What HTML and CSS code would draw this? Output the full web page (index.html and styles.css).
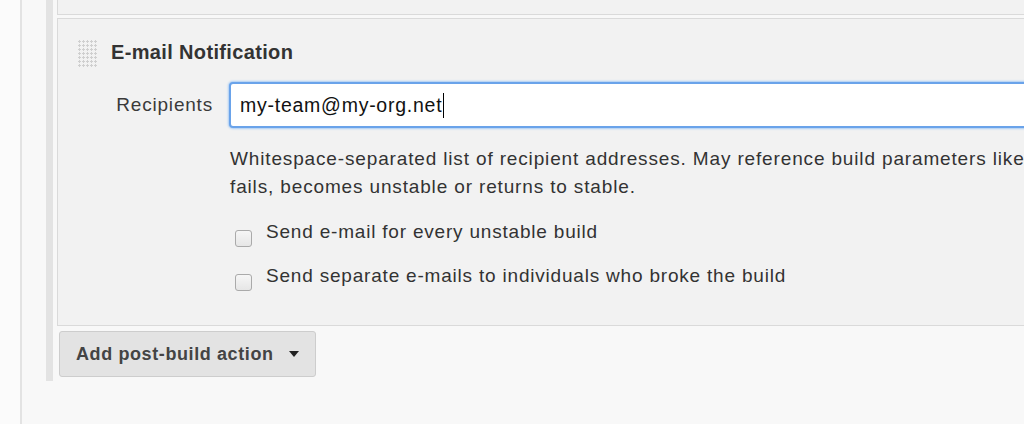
FILE: index.html
```html
<!DOCTYPE html>
<html>
<head>
<meta charset="utf-8">
<link rel="stylesheet" href="styles.css">
</head>
<body>
<div class="page">
  <div class="gutter"></div>
  <div class="main">
    <div class="builder">
      <div class="section section-prev"></div>
      <div class="section section-mail">
        <div class="section-head">
          <div class="grip"></div>
          <div class="title">E-mail Notification</div>
        </div>
        <div class="field">
          <label class="field-label">Recipients</label>
          <div class="field-body">
            <div class="text-input">my-team@my-org.net<span class="caret"></span></div>
            <div class="help">Whitespace-separated list of recipient addresses. May reference build parameters like $PARAM. E-mail will be sent when a build<br>fails, becomes unstable or returns to stable.</div>
            <div class="check-row">
              <span class="checkbox"></span>
              <span class="check-label">Send e-mail for every unstable build</span>
            </div>
            <div class="check-row">
              <span class="checkbox"></span>
              <span class="check-label">Send separate e-mails to individuals who broke the build</span>
            </div>
          </div>
        </div>
      </div>
      <button class="add-btn">Add post-build action <span class="tri"></span></button>
    </div>
  </div>
</div>
</body>
</html>
```
FILE: styles.css
```css
html, body {
  margin: 0;
  padding: 0;
  height: 424px;
  overflow: hidden;
}
body {
  background: #f8f8f8;
  font-family: "Liberation Sans", Arial, sans-serif;
  color: #333;
}
.page {
  display: flex;
  height: 424px;
}
.gutter {
  width: 20px;
  flex: none;
  background: #fbfbfb;
  border-right: 2px solid #e3e3e3;
}
.main {
  flex: 1;
  min-width: 0;
  background: #f8f8f8;
  padding-left: 24px;
}
.builder {
  border-left: 7px solid #e3e3e3;
  padding-left: 4px;
  padding-bottom: 4px;
  width: 1200px;
}
.section {
  background: #f2f2f2;
  border: 1px solid #dadada;
}
.section-prev {
  border-top: none;
  height: 14px;
}
.section-mail {
  margin-top: 3px;
  padding: 20px 0 35px 0;
}
.section-head {
  display: flex;
  align-items: center;
  padding-left: 19px;
  height: 28px;
}
.grip {
  width: 21px;
  height: 28px;
  background-image: radial-gradient(circle at 1.5px 1.5px, #cfcfcf 1px, transparent 1.4px);
  background-size: 4px 4px;
  background-position: 1px 1px;
}
.title {
  margin-left: 13px;
  margin-top: -2px;
  font-weight: bold;
  font-size: 20px;
  letter-spacing: 0.35px;
  line-height: 28px;
  color: #333;
}
.field {
  display: grid;
  grid-template-columns: 155px 1fr;
  column-gap: 16px;
  margin-top: 15px;
}
.field-label {
  text-align: right;
  font-size: 19px;
  letter-spacing: 0.8px;
  line-height: 28px;
  color: #3a3a3a;
  margin-top: 9px;
}
.text-input {
  box-sizing: border-box;
  height: 46px;
  width: 900px;
  border: 2px solid #6aa3ea;
  box-shadow: 0 0 2px 1px #a9ccf5;
  border-radius: 4px;
  background: #fff;
  padding-left: 9px;
  font-size: 19.5px;
  letter-spacing: 0.75px;
  line-height: 42px;
  color: #111;
  display: flex;
  align-items: center;
}
.caret {
  display: inline-block;
  width: 1px;
  height: 25px;
  background: #000;
  margin-left: 1px;
}
.help {
  margin-top: 17px;
  padding-left: 1px;
  font-size: 19px;
  letter-spacing: 0.85px;
  line-height: 28px;
  color: #333;
  white-space: nowrap;
}
.check-row {
  display: flex;
  align-items: flex-start;
  margin-top: 17px;
  padding-left: 6px;
  height: 28px;
}
.check-row + .check-row {
  margin-top: 16px;
}
.checkbox {
  box-sizing: border-box;
  width: 17px;
  height: 17px;
  margin-top: 12px;
  border: 1px solid #aaa;
  border-radius: 3px;
  background: linear-gradient(#f6f6f6, #e6e6e6);
  flex: none;
}
.check-label {
  margin-left: 14px;
  font-size: 19px;
  letter-spacing: 0.8px;
  line-height: 28px;
  color: #333;
  white-space: nowrap;
}
.add-btn {
  display: flex;
  align-items: center;
  margin: 5px 0 0 2px;
  box-sizing: border-box;
  width: 257px;
  height: 46px;
  padding: 0 0 0 16px;
  background: #e3e3e3;
  border: 1px solid #cdcdcd;
  border-radius: 3px;
  font-family: "Liberation Sans", Arial, sans-serif;
  font-weight: bold;
  font-size: 18px;
  letter-spacing: 0.6px;
  color: #444;
}
.tri {
  width: 0;
  height: 0;
  margin-left: 15px;
  border-left: 5px solid transparent;
  border-right: 5px solid transparent;
  border-top: 6px solid #222;
}
```
